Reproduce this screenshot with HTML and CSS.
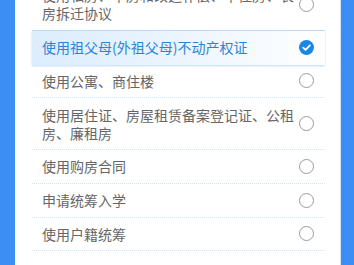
FILE: index.html
```html
<!DOCTYPE html>
<html lang="zh-CN">
<head>
<meta charset="utf-8">
<link rel="stylesheet" href="styles.css">
</head>
<body>
<div class="frame">
  <div class="card">
    <ul class="list">
      <li class="row"><span class="label">使用私房、平房和改造补偿、平住房、长房拆迁协议</span><span class="radio"></span></li>
      <li class="row selected"><span class="label">使用祖父母(外祖父母)不动产权证</span>
        <svg class="check" width="15" height="15" viewBox="0 0 15 15"><circle cx="7.5" cy="7.5" r="7.5" fill="#1a86e6"/><path d="M4.2 7.7 L6.5 9.9 L10.9 5.3" fill="none" stroke="#fff" stroke-width="1.8" stroke-linecap="round" stroke-linejoin="round"/></svg>
      </li>
      <li class="row"><span class="label">使用公寓、商住楼</span><span class="radio"></span></li>
      <li class="row"><span class="label">使用居住证、房屋租赁备案登记证、公租房、廉租房</span><span class="radio"></span></li>
      <li class="row"><span class="label">使用购房合同</span><span class="radio"></span></li>
      <li class="row"><span class="label">申请统筹入学</span><span class="radio"></span></li>
      <li class="row"><span class="label">使用户籍统筹</span><span class="radio"></span></li>
    </ul>
  </div>
</div>
</body>
</html>
```
FILE: styles.css
```css
html, body {
  margin: 0;
  padding: 0;
  height: 100%;
  overflow: hidden;
}
body {
  background: #3b8ef3;
  font-family: "Noto Sans CJK SC", "Noto Sans", sans-serif;
}
.frame {
  padding: 0 13px 0 15px;
  height: 100%;
  box-sizing: border-box;
}
.card {
  background: #fff;
  height: 100%;
  border-right: 1px solid #d3e7fb;
  box-sizing: border-box;
  padding: 0 15px 0 17px;
  overflow: hidden;
}
.list {
  list-style: none;
  margin: -21px 0 0;
  padding: 0;
}
.row {
  display: flex;
  align-items: center;
  justify-content: space-between;
  padding: 7.2px 11px 7.2px 10px;
  border-bottom: 1px dotted #d5e3ee;
  font-size: 14px;
  line-height: 18.3px;
  color: #666;
}
.label {
  width: 256px;
}
.radio {
  width: 13px;
  height: 13px;
  border: 1px solid #9a9a9a;
  border-radius: 50%;
  flex: none;
}
.check {
  flex: none;
  display: block;
}
.selected {
  color: #2a84d6;
  background: linear-gradient(to right, #dcedfd 0%, #eaf4fe 45%, #f7fbff 80%, #ffffff 100%);
  border-top: 1px solid #bfdcf6;
  margin-top: -1px;
  box-shadow: 0 1px 2px rgba(60, 150, 235, 0.35);
  border-bottom-color: transparent;
}
```
